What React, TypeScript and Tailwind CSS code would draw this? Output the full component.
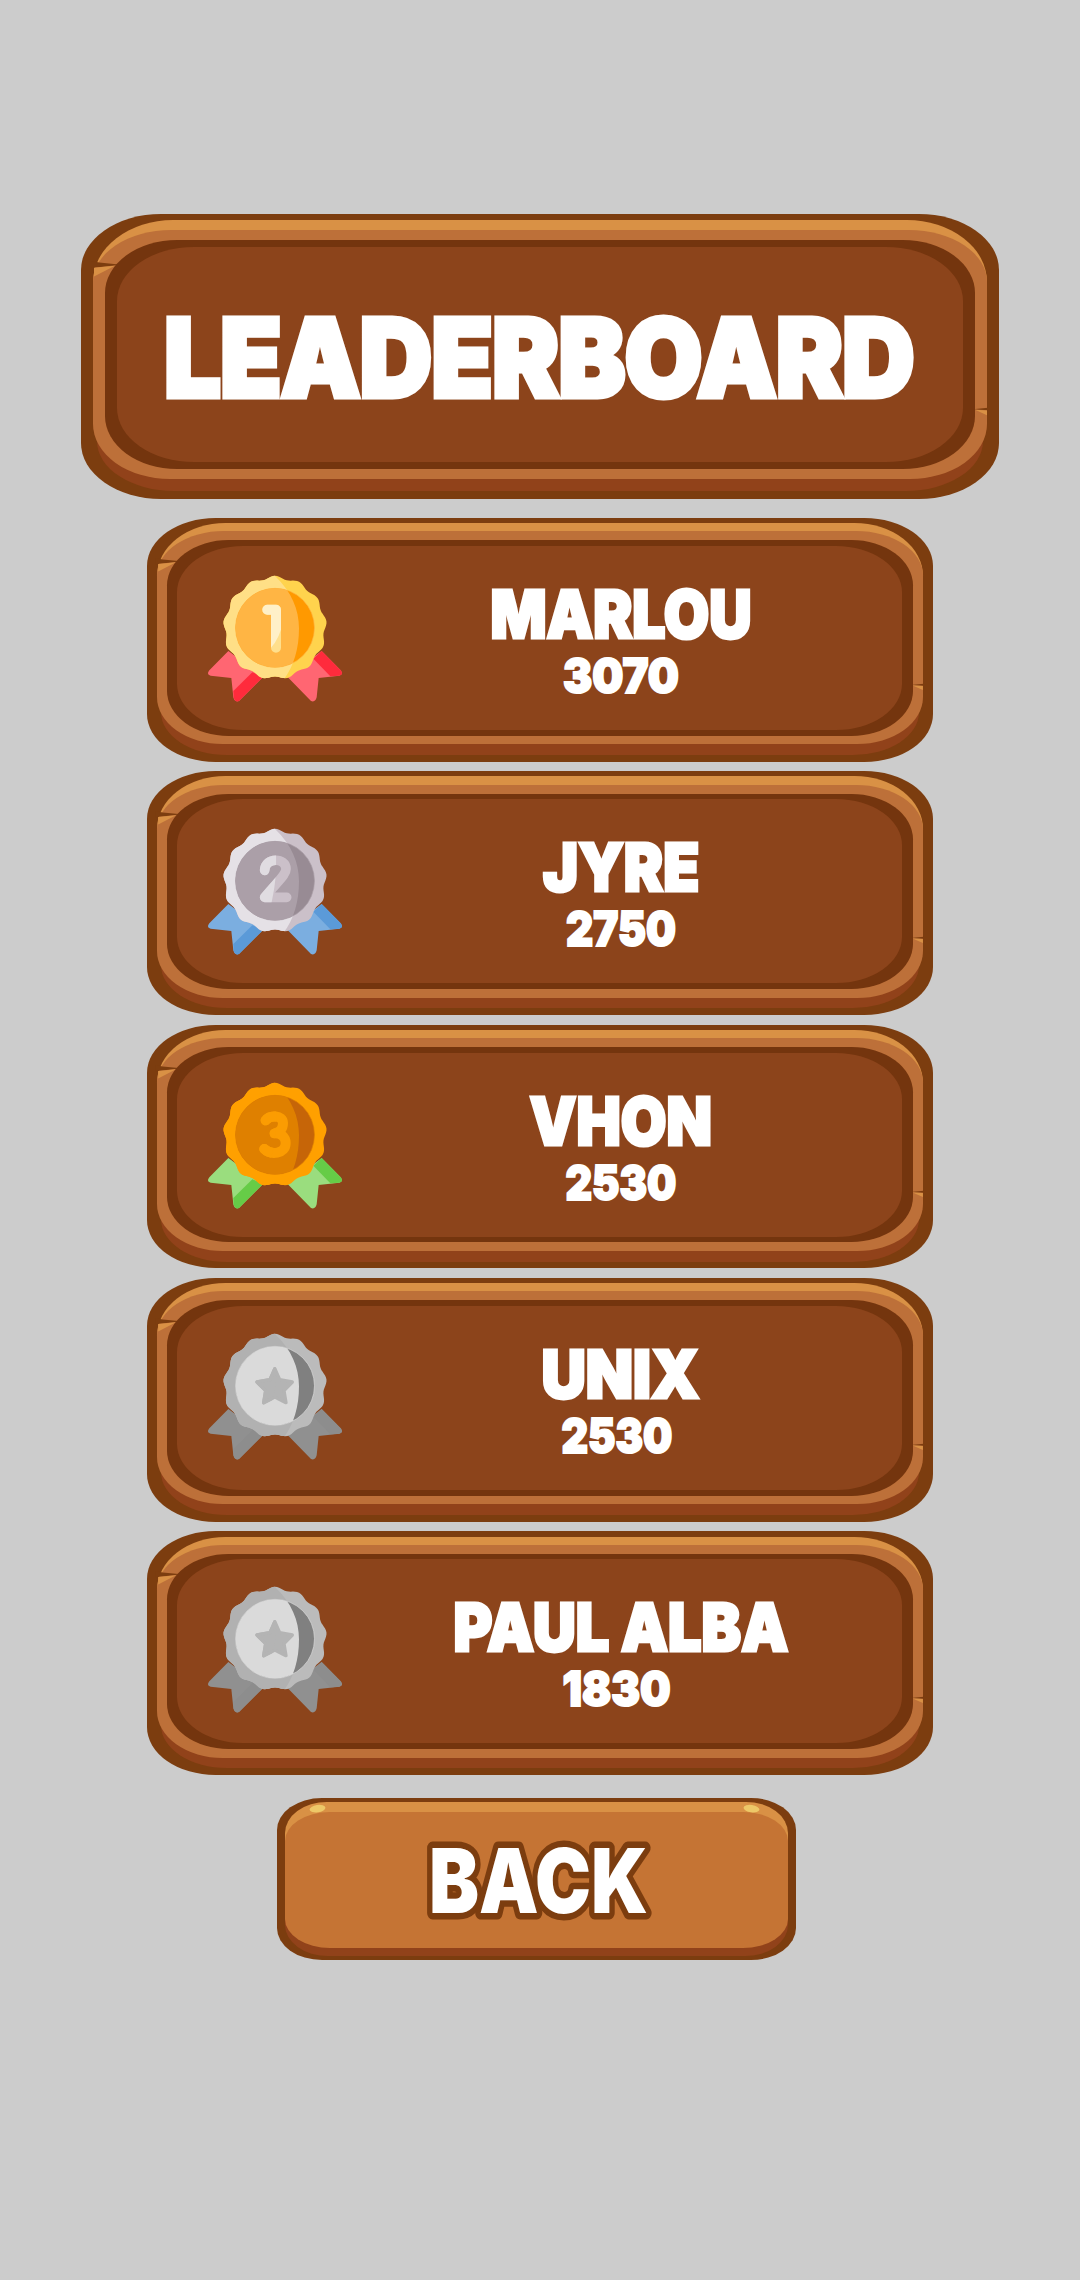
import { useId, useLayoutEffect, useRef, useState, type ReactNode } from "react";

type Tone = {
  ribbon: string;
  ribbonDark: string;
  rim: string;
  rimDark: string;
  disc: string;
  discDark: string;
  mark: string;
  markDark: string;
};

const gold: Tone = { ribbon: "#ff6672", ribbonDark: "#ff2b3c", rim: "#ffdf86", rimDark: "#ffd34d", disc: "#ffb544", discDark: "#ff9900", mark: "#fff0c8", markDark: "#ffdf8c" };
const silver: Tone = { ribbon: "#7baee0", ribbonDark: "#5b9ad8", rim: "#e5e1e6", rimDark: "#cbc0c9", disc: "#ab9fa8", discDark: "#988b94", mark: "#e0dce1", markDark: "#cbc0c9" };
const bronze: Tone = { ribbon: "#9add7e", ribbonDark: "#66cc47", rim: "#ffa000", rimDark: "#ffa000", disc: "#df8000", discDark: "#c66508", mark: "#fb9c02", markDark: "#fb9c02" };
const plain: Tone = { ribbon: "#909090", ribbonDark: "#8d8d8d", rim: "#b1b1b1", rimDark: "#bbbbbb", disc: "#dadada", discDark: "#808080", mark: "#b4b4b4", markDark: "#b4b4b4" };

const rows = [
  { name: "MARLOU", score: "3070", tone: gold, rank: 1, nameW: 261, scoreW: 116, shift: "", medal: "mt-[42px]" },
  { name: "JYRE", score: "2750", tone: silver, rank: 2, nameW: 156, scoreW: 110, shift: "", medal: "mt-[42px]" },
  { name: "VHON", score: "2530", tone: bronze, rank: 3, nameW: 182, scoreW: 111, shift: "", medal: "mt-[42px]" },
  { name: "UNIX", score: "2530", tone: plain, rank: 4, nameW: 158, scoreW: 111, shift: "mr-2", medal: "mt-[40px]" },
  { name: "PAUL ALBA", score: "1830", tone: plain, rank: 5, nameW: 335, scoreW: 108, shift: "mr-2", medal: "mt-[40px]" },
];

const rosette =
  "M" +
  Array.from({ length: 156 }, (_, i) => {
    const a = (i / 156) * Math.PI * 2;
    const r = 151 + 4.5 * Math.cos(13 * a);
    return `${(225 + r * Math.sin(a)).toFixed(1)} ${(203 - r * Math.cos(a)).toFixed(1)}`;
  }).join("L") +
  "Z";

function Mark({ rank, color }: { rank: number; color: string }) {
  const stroke = { fill: "none", stroke: color, strokeLinecap: "round", strokeLinejoin: "round" } as const;
  if (rank === 1) return <path {...stroke} strokeWidth={30} d="M202 149H228V263" />;
  if (rank === 2) return <path {...stroke} strokeWidth={29} d="M194 172C196 132 258 133 258 168C258 186 236 202 194 253H260" />;
  if (rank === 3) return <path {...stroke} strokeWidth={30} d="M197 160C209 143 249 144 249 168C249 186 238 197 224 199C244 199 257 211 257 228C257 262 212 265 193 246" />;
  return (
    <path
      fill={color}
      stroke={color}
      strokeWidth={10}
      strokeLinejoin="round"
      d="M224.500 152L239 185L277 192L252 218L258 254L224.500 237L191 254L197 218L171 192L210 185Z"
    />
  );
}

function Medal({ tone, rank }: { tone: Tone; rank: number }) {
  const id = useId();
  return (
    <svg viewBox="0 0 450 450" className="h-[150px] w-[150px]">
      <defs>
        <clipPath id={id + "a"}>
          <path d="M0 0H225V48C275 95 297 150 297 205C297 265 282 320 250 360H0Z" />
        </clipPath>
        <clipPath id={id + "b"}>
          <path d={rank === 1 ? "M150 100H250V180Q240 235 212 264V290H150Z" : "M150 110H228C230 180 226 220 212 280H150Z"} />
        </clipPath>
      </defs>
      <path fill={tone.ribbon} d="M85 273L28 331Q18 344 32 347L94 354L100 412Q104 428 117 423L190 350Z" />
      <path fill={tone.ribbonDark} d="M157 337L190 350L117 423Q104 428 101 412L100 393Z" />
      <path fill={tone.ribbon} d="M365 273L422 331Q432 344 418 347L356 354L350 412Q346 428 333 423L262 350Z" />
      <path fill={tone.ribbonDark} d="M365 273L422 331Q432 344 418 347L391 349L340 296Z" />
      <path fill={tone.rimDark} d={rosette} />
      <g clipPath={`url(#${id}a)`}>
        <path fill={tone.rim} d={rosette} />
      </g>
      <circle cx="225" cy="203.500" r="118.500" fill={tone.discDark} stroke={tone.disc} strokeWidth="2" />
      <g clipPath={`url(#${id}a)`}>
        <circle cx="225" cy="203.500" r="118.500" fill={tone.disc} />
      </g>
      <Mark rank={rank} color={tone.markDark} />
      <g clipPath={`url(#${id}b)`}>
        <Mark rank={rank} color={tone.mark} />
      </g>
    </svg>
  );
}

/* Squeezes or widens a line of text so that it fills the given width. */
function FitText({ width, className, children }: { width: number; className: string; children: string }) {
  const ref = useRef<HTMLSpanElement>(null);
  const [scale, setScale] = useState(1);
  useLayoutEffect(() => {
    if (ref.current) setScale(width / ref.current.offsetWidth);
  }, [width, children]);
  return (
    <div className={"flex justify-center whitespace-nowrap font-['Inter',sans-serif] font-black text-white " + className} style={{ width }}>
      <span ref={ref} className="shrink-0" style={{ transform: `scaleX(${scale})` }}>
        {children}
      </span>
    </div>
  );
}

/* Carved wooden plank; every measure is in em, so the font size sets its scale. */
function Plank({ className, children }: { className: string; children: ReactNode }) {
  return (
    <div className={"grid shrink-0 rounded-[0.8em/0.56em] bg-[#7c3d0f] *:[grid-area:1/1] " + className}>
      <div className="mb-[0.08em] ml-[0.16em] mr-[0.155em] mt-[1em] bg-[#91421a] [border-bottom-left-radius:0.77em_0.5em] [border-bottom-right-radius:0.77em_0.5em]" />
      <div className="mb-[1.4em] ml-[0.12em] mr-[0.115em] mt-[0.06em] bg-[#d99145] [border-top-left-radius:0.8em_0.62em] [border-top-right-radius:0.8em_0.62em]" />
      <div className="mb-[0.205em] ml-[0.12em] mr-[0.115em] mt-[0.155em] rounded-[0.78em_0.78em_0.77em_0.77em/0.52em_0.52em_0.55em_0.55em] bg-[#bd7039]" />
      <svg viewBox="0 0 917.5 285" preserveAspectRatio="none" className="h-full w-full">
        <path fill="#7c3d0f" d="M10 47L18.300 48.500L40 50.700L10 54Z" />
        <path fill="#d99145" d="M13 53.700L34 51.700L13 62.500Z" />
        <path fill="#7c3d0f" d="M907 193.800L892 195.200L907 196.200Z" />
        <path fill="#d99145" d="M894 195.800L906 196.500V201.200Z" />
      </svg>
      <div className="mb-[0.303em] ml-[0.24em] mr-[0.235em] mt-[0.26em] rounded-[0.72em/0.53em] bg-[#74350e]" />
      <div className="mb-[0.373em] ml-[0.357em] mr-[0.355em] mt-[0.327em] rounded-[0.77em/0.54em] bg-[#8c441b]" />
      {children}
    </div>
  );
}

function BackButton() {
  return (
    <button className="ml-[-7px] mt-[23px] grid h-[162px] w-[519px] shrink-0 rounded-[45px/32px] bg-[#7c3d0f] *:[grid-area:1/1]">
      <span className="mx-2 mb-1 mt-16 bg-[#91421a] [border-bottom-left-radius:43px_31px] [border-bottom-right-radius:43px_31px]" />
      <span className="mx-2 mb-[60px] mt-[4px] bg-[#d99145] [border-top-left-radius:42px_31px] [border-top-right-radius:42px_31px]" />
      <span className="mx-2 mb-3 mt-[14px] rounded-[45px/29px] bg-[#c57434]" />
      <svg viewBox="0 0 519 162" className="h-full w-full">
        <ellipse cx="40.500" cy="10.700" rx="8" ry="3.700" fill="#edc868" transform="rotate(-8 40.500 10.700)" />
        <ellipse cx="474.500" cy="10.700" rx="8" ry="3.700" fill="#edc868" transform="rotate(8 474.500 10.700)" />
        <text
          x="152"
          y="114.500"
          textLength="219"
          lengthAdjust="spacingAndGlyphs"
          className="fill-white stroke-[#7c3d0f] stroke-[13px] font-['Inter',sans-serif] text-[90px] font-black [paint-order:stroke] [stroke-linejoin:round]"
        >
          BACK
        </text>
      </svg>
    </button>
  );
}

export default function App() {
  return (
    <main className="flex h-[2280px] w-[1080px] flex-col items-center overflow-hidden bg-[#cccccc] pt-[214px]">
      <Plank className="h-[2.85em] w-[9.175em] text-[100px]">
        <h1 className="mt-[101px] flex justify-center pr-[3px]">
          <FitText width={750} className="h-[84px] text-[109px] leading-[84px] tracking-[-0.01em] [-webkit-text-stroke:5px_white]">
            LEADERBOARD
          </FitText>
        </h1>
      </Plank>
      <ol className="mr-[0.5px] mt-[19px] flex flex-col gap-[9.700px]">
        {rows.map((row) => (
          <li key={row.name}>
            <Plank className="h-[2.85em] w-[9.19em] text-[85.5px]">
              <div className="flex items-start pl-[53px] pr-[41px]">
                <div className={row.medal}>
                  <Medal tone={row.tone} rank={row.rank} />
                </div>
                <div className="flex flex-1 flex-col items-center pt-[71px]">
                  <FitText width={row.nameW} className="h-[51px] text-[66.5px] leading-[51px] [-webkit-text-stroke:3px_white]">
                    {row.name}
                  </FitText>
                  <div className={"mt-[18px] " + row.shift}>
                    <FitText width={row.scoreW} className="h-[36px] text-[47.5px] leading-[36px] [-webkit-text-stroke:2px_white]">
                      {row.score}
                    </FitText>
                  </div>
                </div>
              </div>
            </Plank>
          </li>
        ))}
      </ol>
      <BackButton />
    </main>
  );
}
